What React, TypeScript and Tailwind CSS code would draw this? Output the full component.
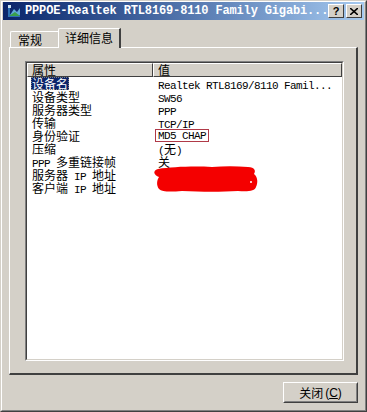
import React from "react";

const rows: [string, string][] = [
  ["设备名", "Realtek RTL8169/8110 Famil..."],
  ["设备类型", "SW56"],
  ["服务器类型", "PPP"],
  ["传输", "TCP/IP"],
  ["身份验证", "MD5 CHAP"],
  ["压缩", "(无)"],
  ["PPP 多重链接帧", "关"],
  ["服务器 IP 地址", ""],
  ["客户端 IP 地址", ""],
];

const cjk = { fontFamily: '"Noto Sans CJK SC", sans-serif' };

function Mixed({ text }: { text: string }) {
  const parts = text.split(/([\u0000-\u007f]+)/).filter((p) => p.length > 0);
  return (
    <>
      {parts.map((p, i) =>
        /^[\u0000-\u007f]+$/.test(p) ? (
          <span key={i} className="whitespace-pre font-['Liberation_Mono',monospace] text-[11px] tracking-[-0.6px] leading-[13px]">
            {p}
          </span>
        ) : (
          <span key={i} className="whitespace-pre font-['Noto_Sans_CJK_SC',sans-serif] text-[12px] leading-[13px]">
            {p}
          </span>
        )
      )}
    </>
  );
}

export default function App() {
  return (
    <div className="w-[367px] h-[412px] bg-[#d4d0c8] border border-t-[#d4d0c8] border-l-[#d4d0c8] border-r-[#404040] border-b-[#404040] overflow-hidden">
      <div className="h-full w-full border border-t-white border-l-white border-r-[#808080] border-b-[#808080] flex flex-col px-[1px]">
        {/* Title bar */}
        <div className="h-[18px] flex items-center bg-gradient-to-r from-[#0a246a] to-[#a6caf0] pl-[3px] pr-[2px]">
          <svg width="16" height="16" viewBox="0 0 16 16" className="shrink-0">
            <path d="M2 14 L2 3 L4 3 L4 12 L14 12 L14 14 Z" fill="#2d6fb5" />
            <path d="M4 12 L8 6 L11 9 L14 5 L14 12 Z" fill="#5fa9d8" />
            <path d="M3 13 L9 9 L14 13 Z" fill="#3aa04a" />
            <rect x="2" y="2" width="3" height="3" fill="#c8dff0" />
          </svg>
          <div className="ml-[3px] text-white font-bold font-['Liberation_Mono',monospace] text-[12px] tracking-[-0.15px] leading-none whitespace-nowrap flex-1 overflow-hidden">
            PPPOE-Realtek RTL8169-8110 Family Gigabi...
          </div>
          <div className="flex gap-[2px]">
            <div className="w-[16px] h-[14px] bg-[#d4d0c8] border border-t-white border-l-white border-r-[#404040] border-b-[#404040] flex items-center justify-center text-black font-bold font-['Liberation_Sans',sans-serif] text-[11px] leading-none">
              ?
            </div>
            <div className="w-[16px] h-[14px] bg-[#d4d0c8] border border-t-white border-l-white border-r-[#404040] border-b-[#404040] flex items-center justify-center">
              <svg width="8" height="7" viewBox="0 0 8 7">
                <path d="M0 0 L8 7 M8 0 L0 7" stroke="black" strokeWidth="1.6" />
              </svg>
            </div>
          </div>
        </div>

        {/* Tabs */}
        <div className="mt-[8px] ml-[7px] flex items-end h-[19px]">
          <div className="h-[16px] w-[49px] border-t border-l border-t-white border-l-white border-r border-r-[#404040] rounded-tl-[2px] flex items-center pl-[7px]">
            <span style={cjk} className="text-[12px] text-black leading-none">常规</span>
          </div>
          <div className="h-[20px] w-[63px] -ml-[1px] border-t border-l border-t-white border-l-white border-r-2 border-r-[#404040] rounded-tl-[2px] flex items-start pt-[3px] pl-[6px] bg-[#d4d0c8] relative z-10 -mb-[1px]">
            <span style={cjk} className="text-[12px] text-black leading-none">详细信息</span>
          </div>
        </div>

        {/* Tab panel */}
        <div className="ml-[6px] w-[349px] h-[328px] border-l border-t border-l-white border-t-white border-r-2 border-b-2 border-r-[#404040] border-b-[#404040] pt-[13px] pl-[15px]">
          <div className="w-[319px] h-[300px] border border-t-[#808080] border-l-[#808080] border-r-white border-b-white">
            <div className="h-full w-full border border-t-[#404040] border-l-[#404040] border-r-[#d4d0c8] border-b-[#d4d0c8] bg-white relative">
              {/* header */}
              <div className="flex h-[14px]">
                <div className="w-[126px] h-full bg-[#d4d0c8] border border-t-white border-l-white border-r-[#404040] border-b-[#404040] flex items-center pl-[4px]">
                  <span style={cjk} className="text-[12px] leading-none text-black">属性</span>
                </div>
                <div className="flex-1 h-full bg-[#d4d0c8] border border-t-white border-l-white border-r-[#404040] border-b-[#404040] flex items-center pl-[4px]">
                  <span style={cjk} className="text-[12px] leading-none text-black">值</span>
                </div>
              </div>
              {/* rows */}
              <div className="flex flex-col">
                {rows.map(([k, v], i) => (
                  <div key={i} className="flex h-[13px] items-center">
                    <div className="w-[126px] pl-[4px] h-full flex items-center">
                      <div
                        className={
                          "h-[13px] leading-[13px] whitespace-pre px-[1px] " +
                          (i === 0 ? "bg-[#0a246a] text-white outline outline-1 outline-dotted outline-[#808080] -outline-offset-1" : "text-black")
                        }
                      >
                        <Mixed text={k} />
                      </div>
                    </div>
                    <div className="flex-1 pl-[5px] h-full flex items-center">
                      {v &&
                        (i === 4 ? (
                          <div className="h-[13px] flex items-center border border-[#b03a48] px-[2px] -ml-[3px] text-black">
                            <div className="whitespace-pre leading-[11px]">
                              <Mixed text={v} />
                            </div>
                          </div>
                        ) : (
                          <div className="h-[13px] leading-[13px] whitespace-pre text-black">
                            <Mixed text={v} />
                          </div>
                        ))}
                    </div>
                  </div>
                ))}
              </div>
              {/* red scribble */}
              <svg className="absolute left-[125px] top-[102px]" width="108" height="28" viewBox="0 0 108 28">
                <path
                  d="M6 4 C20 2 40 1 60 2 C72 1 84 1 96 2 C103 2 104 6 102 9 C106 12 106 18 104 22 C103 26 96 27 86 26 C70 27 50 27 30 26 C18 27 10 27 7 24 C4 20 5 15 7 12 C2 10 0 6 6 4 Z"
                  fill="#f40000"
                />
                <circle cx="99" cy="17" r="1" fill="white" />
              </svg>
            </div>
          </div>
        </div>

        {/* Button row */}
        <div className="flex justify-end pr-[6px] mt-[7px]">
          <div className="w-[75px] h-[21px] border border-t-white border-l-white border-r-[#404040] border-b-[#404040]">
            <div className="w-full h-full border border-t-[#d4d0c8] border-l-[#d4d0c8] border-r-[#808080] border-b-[#808080] flex items-center justify-center">
              <span style={cjk} className="text-[12px] leading-none text-black">关闭</span>
              <span className="ml-[2px] text-[12px] leading-none text-black font-['Liberation_Sans',sans-serif]">
                (<span className="underline">C</span>)
              </span>
            </div>
          </div>
        </div>
      </div>
    </div>
  );
}
